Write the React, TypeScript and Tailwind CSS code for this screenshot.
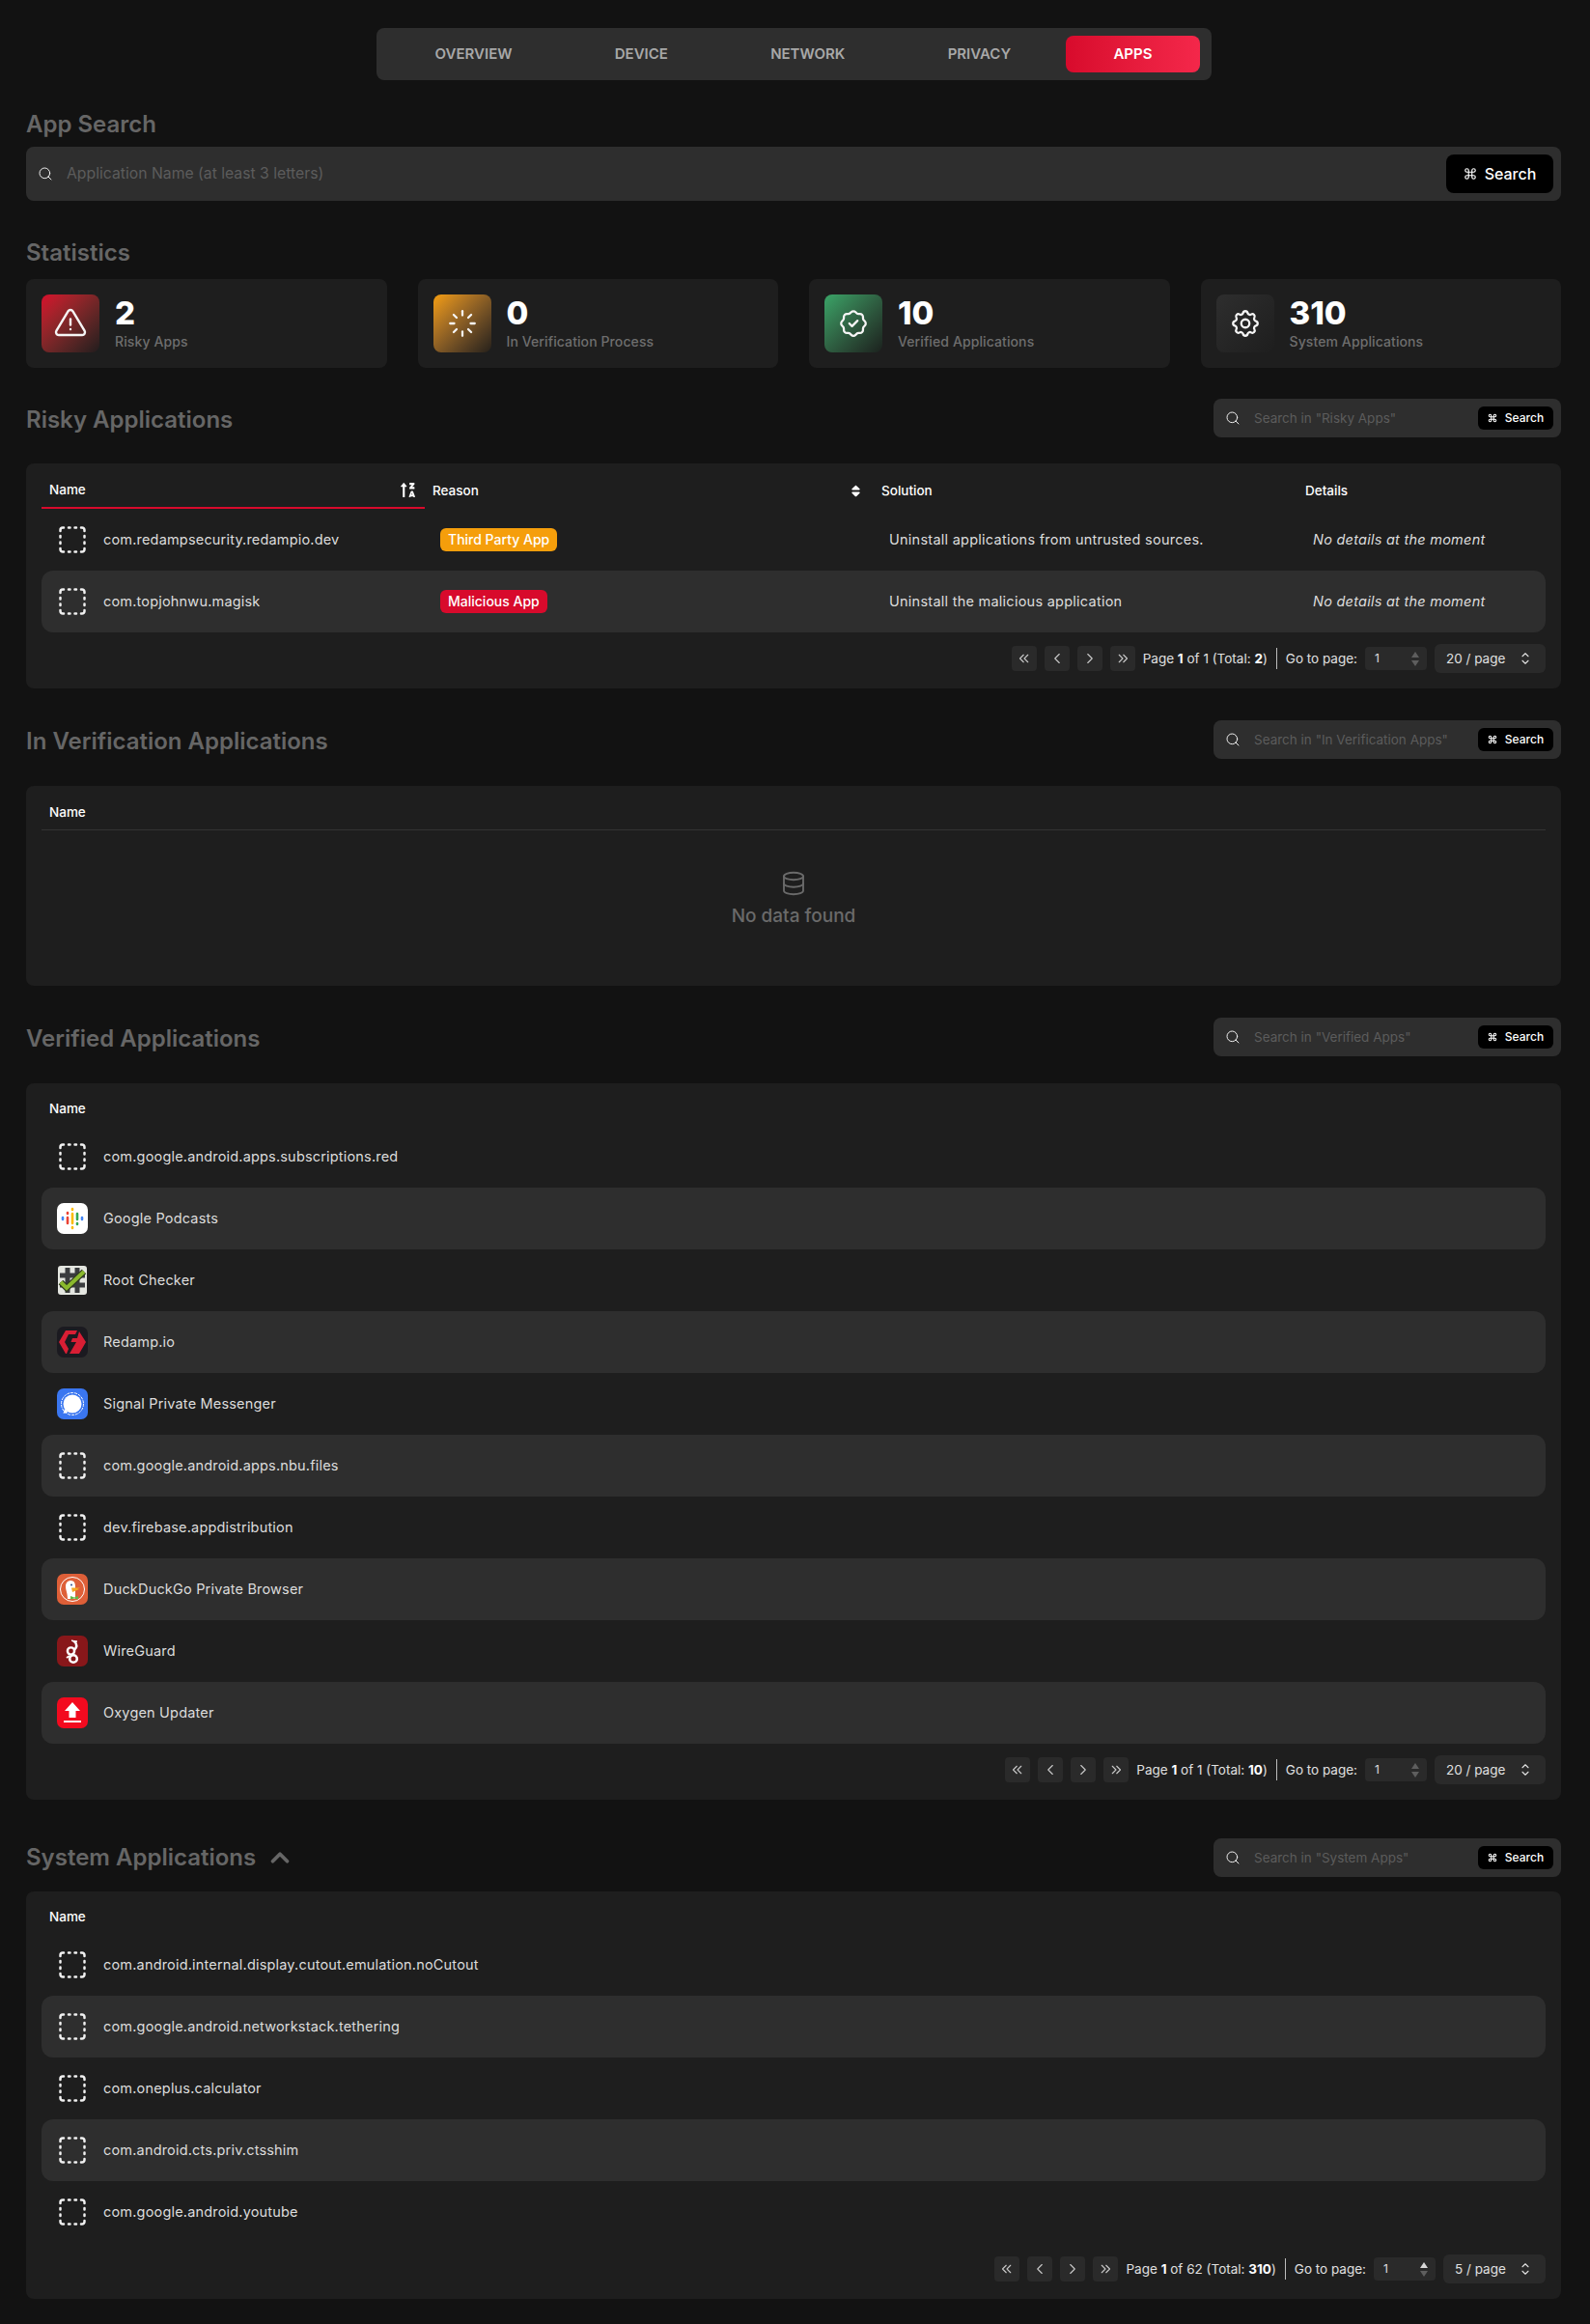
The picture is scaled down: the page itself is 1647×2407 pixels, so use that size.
import { Command, Search } from 'lucide-react';
import { FaSort, FaSortAlphaUpAlt } from 'react-icons/fa';
import {
  TbAlertTriangle,
  TbChevronLeft,
  TbChevronRight,
  TbChevronsLeft,
  TbChevronsRight,
  TbChevronUp,
  TbDatabase,
  TbLoader,
  TbRosetteDiscountCheck,
  TbSelector,
  TbSettings,
} from 'react-icons/tb';
import type { ReactNode } from 'react';

function DashedSquare() {
  return (
    <svg width="32" height="32" viewBox="0 0 32 32" fill="none" stroke="#f0f0f0" strokeWidth="2.5" strokeLinecap="round" strokeLinejoin="round">
      <path d="M3.500 7V6a2.500 2.500 0 0 1 2.500-2.500h1" />
      <path d="M25 3.500h1a2.500 2.500 0 0 1 2.500 2.500v1" />
      <path d="M28.500 25v1a2.500 2.500 0 0 1-2.500 2.500h-1" />
      <path d="M7 28.500H6a2.500 2.500 0 0 1-2.500-2.500v-1" />
      <path d="M12 3.500h1.500M18.500 3.500h1.500M12 28.500h1.500M18.500 28.500h1.500M3.500 12v1.500M3.500 18.500v1.500M28.500 12v1.500M28.500 18.500v1.500" />
    </svg>
  );
}

function GooglePodcasts() {
  return (
    <svg width="32" height="32" viewBox="0 0 32 32" strokeWidth="2.6" strokeLinecap="round">
      <rect width="32" height="32" rx="7" fill="#fff" />
      <path d="M6 15v2M26 15v2" stroke="#4285f4" />
      <path d="M11 10v1M11 15v6" stroke="#ea4335" />
      <path d="M16 6v1M16 11v10M16 25v1" stroke="#fbbc04" />
      <path d="M21 11v6M21 21v1" stroke="#34a853" />
    </svg>
  );
}

function RootChecker() {
  return (
    <svg width="32" height="32" viewBox="0 0 32 32">
      <rect x="1" y="1" width="30" height="30" rx="3" fill="#e4e6e0" />
      <path d="M11 3v26M21 3v26M3 11h26M3 21h26" stroke="#3a3c3e" strokeWidth="5" />
      <path d="M4 18l6 6L28 7" stroke="#2f3a20" strokeWidth="6.500" fill="none" />
      <path d="M4 18l6 6L28 7" stroke="#8ab92d" strokeWidth="4" fill="none" />
    </svg>
  );
}

function Redamp() {
  return (
    <svg width="32" height="32" viewBox="0 0 32 32" fill="#d81e34">
      <rect width="32" height="32" rx="7" fill="#1b1a20" />
      <path d="M2 16L9 4H21L19 8H12L8 16L12 23L10 28H9Z" />
      <path d="M23 5L30 16L23 28H13L20 16H14.500L16 12H21Z" />
    </svg>
  );
}

function Signal() {
  return (
    <svg width="32" height="32" viewBox="0 0 32 32">
      <rect width="32" height="32" rx="7" fill="#3a76f0" />
      <circle cx="16" cy="16" r="11.500" fill="none" stroke="#fff" strokeWidth="1" strokeDasharray="3 1" />
      <circle cx="16" cy="16" r="9.500" fill="#fff" />
      <path d="M8 21l-1.500 5 5-1.500z" fill="#fff" />
    </svg>
  );
}

function DuckDuckGo() {
  return (
    <svg width="32" height="32" viewBox="0 0 32 32">
      <rect width="32" height="32" rx="7" fill="#de5f38" />
      <circle cx="16" cy="16" r="12.500" fill="none" stroke="#fff" strokeWidth="1" />
      <path d="M11 26c0-6-2-9-2-13 0-4 2.500-6 5.500-6S19 9 19 13v13z" fill="#fff" />
      <path d="M15 14.500h9l-3 1.500h2l-7 3z" fill="#f5a623" />
      <circle cx="15" cy="11.500" r="1" fill="#2d4f8e" />
      <path d="M14 23l4 1.500 4-1.500v3.500l-4-1-4 1z" fill="#62bb46" />
    </svg>
  );
}

function WireGuard() {
  return (
    <svg width="32" height="32" viewBox="0 0 32 32" fill="none" stroke="#fff">
      <rect width="32" height="32" rx="7" fill="#88171a" stroke="none" />
      <circle cx="17" cy="24" r="3.800" strokeWidth="2.600" />
      <circle cx="14.500" cy="16" r="3.600" strokeWidth="2.400" />
      <path d="M18 6c3 3 3 6 0 9" strokeWidth="2.400" />
      <path d="M15 5l6 1-3 1z" fill="#fff" strokeWidth="1" />
      <path d="M13 21l-3 2" strokeWidth="2" />
    </svg>
  );
}

function OxygenUpdater() {
  return (
    <svg width="32" height="32" viewBox="0 0 32 32">
      <rect width="32" height="32" rx="7" fill="#f30a1f" />
      <path d="M16 5l8 9h-4.500v7h-7v-7H8z" fill="#fff" />
      <rect x="7" y="24" width="18" height="2" fill="#fff" />
    </svg>
  );
}

function SearchBox({ placeholder, large }: { placeholder: string; large?: boolean }) {
  return (
    <div className={`flex items-center rounded-lg bg-[#2e2e2e] ${large ? 'h-14 w-full pl-[12px] pr-2' : 'h-10 w-[360px] pl-[12px] pr-2'}`}>
      <Search size={16} strokeWidth={1.5} className="shrink-0 text-[#f0f0f0]" />
      <input
        readOnly
        placeholder={placeholder}
        className={`min-w-0 flex-1 bg-transparent outline-none placeholder:text-[#5c5c5c] ${large ? 'ml-[14px] text-[15.750px]' : 'ml-[14px] text-[13.500px]'}`}
      />
      {large ? (
        <button className="flex h-10 w-[111px] items-center justify-center gap-2 rounded-lg bg-black text-base font-medium text-white">
          <Command size={14} strokeWidth={2} />
          Search
        </button>
      ) : (
        <button className="flex h-6 w-[78px] items-center justify-center gap-2 rounded-md bg-black text-xs font-medium text-white">
          <Command size={10} strokeWidth={2.500} />
          Search
        </button>
      )}
    </div>
  );
}

function StatCard({ icon, gradient, value, label }: { icon: ReactNode; gradient: string; value: number; label: string }) {
  return (
    <div className="flex h-[92px] items-center gap-4 rounded-lg bg-[#1e1e1e] px-4">
      <div className={`flex h-[60px] w-[60px] shrink-0 items-center justify-center rounded-lg text-[#f5f5f5] ${gradient}`}>{icon}</div>
      <div>
        <div className="-mt-[2px] mb-[2px] text-[33px] leading-[38px] font-extrabold text-white">{value}</div>
        <div className="text-sm leading-[18px] font-medium tracking-[0.1px] text-[#6e6e6e]">{label}</div>
      </div>
    </div>
  );
}

function Pager({ page, pages, total, size }: { page: number; pages: number; total: number; size: number }) {
  const btn = 'flex h-[26px] w-[26px] items-center justify-center rounded bg-[#2a2a2a] text-[#c8c8c8]';
  return (
    <div className="mt-3 flex h-[30px] items-center justify-end gap-2 text-[13.500px] text-[#e0e0e0]">
      <button className={btn}><TbChevronsLeft size={18} strokeWidth={1.500} /></button>
      <button className={btn}><TbChevronLeft size={18} strokeWidth={1.500} /></button>
      <button className={btn}><TbChevronRight size={18} strokeWidth={1.500} /></button>
      <button className={btn}><TbChevronsRight size={18} strokeWidth={1.500} /></button>
      <span>Page <b className="font-bold text-white">{page}</b> of {pages} (Total: <b className="font-bold text-white">{total}</b>)</span>
      <span className="mx-px h-[22px] w-px bg-[#bdbdbd]" />
      <span>Go to page:</span>
      <div className="flex h-6 w-16 items-center justify-between rounded bg-[#2a2a2a] pr-2 pl-2.5 text-xs">
        <span>1</span>
        <span className="flex flex-col gap-[3px]">
          <span className={`h-0 w-0 border-x-4 border-b-[6px] border-x-transparent ${pages > 1 ? 'border-b-[#d8d8d8]' : 'border-b-[#5e5e5e]'}`} />
          <span className="h-0 w-0 border-x-4 border-t-[6px] border-x-transparent border-t-[#5e5e5e]" />
        </span>
      </div>
      <div className={`flex h-[30px] items-center justify-between rounded-md bg-[#2a2a2a] pr-3 pl-3 ${size === 5 ? 'w-[106px]' : 'w-[115px]'}`}>
        <span>{size} / page</span>
        <TbSelector size={18} strokeWidth={1.500} />
      </div>
    </div>
  );
}

function AppName({ icon, name }: { icon: ReactNode; name: string }) {
  return (
    <div className="flex items-center gap-4 pl-4">
      {icon}
      <span className="-mt-px text-[14.500px] tracking-[0.18px] text-[#dcdcdc]">{name}</span>
    </div>
  );
}

function NameTable({ rows, pager }: { rows: { icon?: ReactNode; name: string }[]; pager: ReactNode }) {
  return (
    <div className="rounded-lg bg-[#1e1e1e] px-4 pt-4 pb-[16px]">
      <div className="flex h-7 items-center pb-[7px] pl-2 text-[13.500px] font-medium text-white">Name</div>
      {rows.map((r, i) => (
        <div key={r.name} className={`flex h-16 items-center rounded-xl ${i % 2 ? 'bg-[#2e2e2e]' : ''}`}>
          <AppName icon={r.icon ?? <DashedSquare />} name={r.name} />
        </div>
      ))}
      {pager}
    </div>
  );
}

function Heading({ children }: { children: ReactNode }) {
  return <h2 className="flex items-center text-2xl font-semibold text-[#666]">{children}</h2>;
}

function SectionHead({ title, search, extra }: { title: string; search: string; extra?: ReactNode }) {
  return (
    <div className="flex items-center justify-between">
      <div className={extra ? '' : 'pt-[3px]'}>
        <Heading>{title}{extra}</Heading>
      </div>
      <SearchBox placeholder={`Search in "${search}"`} />
    </div>
  );
}

const tabs = ['OVERVIEW', 'DEVICE', 'NETWORK', 'PRIVACY', 'APPS'];

const verified = [
  { name: 'com.google.android.apps.subscriptions.red' },
  { name: 'Google Podcasts', icon: <GooglePodcasts /> },
  { name: 'Root Checker', icon: <RootChecker /> },
  { name: 'Redamp.io', icon: <Redamp /> },
  { name: 'Signal Private Messenger', icon: <Signal /> },
  { name: 'com.google.android.apps.nbu.files' },
  { name: 'dev.firebase.appdistribution' },
  { name: 'DuckDuckGo Private Browser', icon: <DuckDuckGo /> },
  { name: 'WireGuard', icon: <WireGuard /> },
  { name: 'Oxygen Updater', icon: <OxygenUpdater /> },
];

const systemApps = [
  { name: 'com.android.internal.display.cutout.emulation.noCutout' },
  { name: 'com.google.android.networkstack.tethering' },
  { name: 'com.oneplus.calculator' },
  { name: 'com.android.cts.priv.ctsshim' },
  { name: 'com.google.android.youtube' },
];

const riskCols = 'grid grid-cols-[397px_465px_439px_257px]';

export default function App() {
  return (
    <div className="min-h-[2407px] bg-[#121212] pt-[29px] pr-[30px] pb-[25px] pl-[27px] font-['Inter','Liberation_Sans',sans-serif]">
      <nav className="mx-auto flex h-[54px] w-[865px] items-center gap-2 rounded-lg bg-[#2e2e2e] px-3">
        {tabs.map((t) => (
          <button
            key={t}
            className={`flex h-[38px] flex-auto items-center justify-center rounded-lg text-[15px] font-semibold ${t === 'APPS' ? 'bg-linear-to-r from-[#d80a2c] to-[#f4274a] text-white' : 'text-[#a8a8a8]'}`}
          >
            {t}
          </button>
        ))}
      </nav>

      <div className="mt-[30px] mb-[7px]"><Heading>App Search</Heading></div>
      <SearchBox large placeholder="Application Name (at least 3 letters)" />

      <div className="mt-[38px] mb-[11px]"><Heading>Statistics</Heading></div>
      <div className="grid grid-cols-4 gap-8">
        <StatCard icon={<TbAlertTriangle size={36} strokeWidth={1.600} />} gradient="bg-linear-to-br from-[#d80a2c] to-[#221c1d]" value={2} label="Risky Apps" />
        <StatCard icon={<TbLoader size={34} strokeWidth={1.600} />} gradient="bg-linear-to-br from-[#f59e0b] to-[#27211a]" value={0} label="In Verification Process" />
        <StatCard icon={<TbRosetteDiscountCheck size={34} strokeWidth={1.600} />} gradient="bg-linear-to-br from-[#3aa568] to-[#1b221e]" value={10} label="Verified Applications" />
        <StatCard icon={<TbSettings size={34} strokeWidth={1.600} />} gradient="bg-linear-to-br from-[#2e2e2e] to-[#1e1e1e]" value={310} label="System Applications" />
      </div>

      <div className="mt-8"><SectionHead title="Risky Applications" search="Risky Apps" /></div>
      <div className="mt-[27px] rounded-lg bg-[#1e1e1e] px-4 pt-4 pb-4">
        <div className={`${riskCols} text-[13.500px] font-medium text-white`}>
          <div className="flex h-[31px] items-center justify-between border-b-2 border-[#d80a2c] pr-[9px] pb-[7px] pl-2">
            Name
            <FaSortAlphaUpAlt size={17} />
          </div>
          <div className="flex h-[31px] items-center justify-between pr-[11px] pb-[7px] pl-2">
            Reason
            <FaSort size={15} />
          </div>
          <div className="flex h-[31px] items-center pb-[7px] pl-2">Solution</div>
          <div className="flex h-[31px] items-center pb-[7px] pl-2">Details</div>
        </div>
        {[
          { name: 'com.redampsecurity.redampio.dev', tag: 'Third Party App', color: 'bg-[#f59e0b]', fix: 'Uninstall applications from untrusted sources.' },
          { name: 'com.topjohnwu.magisk', tag: 'Malicious App', color: 'bg-[#d80a2c]', fix: 'Uninstall the malicious application' },
        ].map((r, i) => (
          <div key={r.name} className={`${riskCols} h-16 items-center rounded-xl text-[14.500px] tracking-[0.25px] text-[#dcdcdc] ${i % 2 ? 'bg-[#2e2e2e]' : ''}`}>
            <AppName icon={<DashedSquare />} name={r.name} />
            <div className="pl-4">
              <span className={`inline-flex h-6 items-center rounded-md px-2 text-sm font-medium tracking-normal text-white ${r.color}`}>{r.tag}</span>
            </div>
            <div className="-mt-px pl-4">{r.fix}</div>
            <div className="-mt-px pl-4 italic">No details at the moment</div>
          </div>
        ))}
        <Pager page={1} pages={1} total={2} size={20} />
      </div>

      <div className="mt-[33px]"><SectionHead title="In Verification Applications" search="In Verification Apps" /></div>
      <div className="mt-[28px] h-[207px] rounded-lg bg-[#1e1e1e] px-4 pt-4">
        <div className="flex h-[30px] items-center border-b border-[#333] pb-[7px] pl-2 text-[13.500px] font-medium text-white">Name</div>
        <div className="mt-[40px] flex flex-col items-center text-[#6a6a6a]">
          <TbDatabase size={30} strokeWidth={1.500} />
          <div className="mt-[5px] text-[19px] font-medium">No data found</div>
        </div>
      </div>

      <div className="mt-[33px]"><SectionHead title="Verified Applications" search="Verified Apps" /></div>
      <div className="mt-[28px]">
        <NameTable rows={verified} pager={<Pager page={1} pages={1} total={10} size={20} />} />
      </div>

      <div className="mt-10">
        <SectionHead
          title="System Applications"
          search="System Apps"
          extra={<TbChevronUp size={30} strokeWidth={3} className="ml-[10px]" />}
        />
      </div>
      <div className="mt-[15px]">
        <NameTable rows={systemApps} pager={<Pager page={1} pages={62} total={310} size={5} />} />
      </div>
    </div>
  );
}
